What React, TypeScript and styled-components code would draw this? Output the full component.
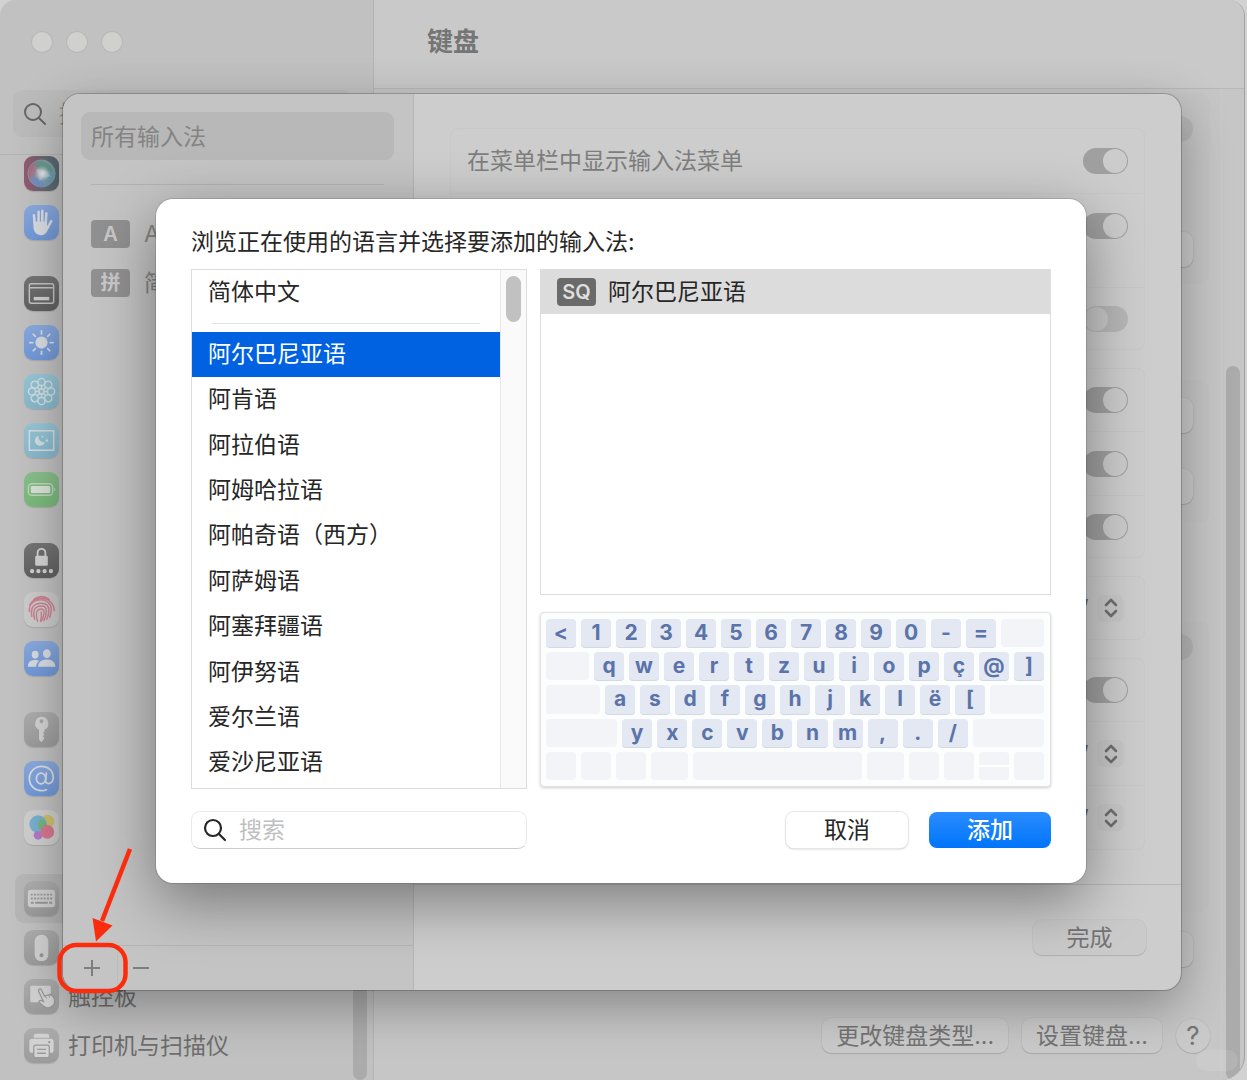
import React from "react";
import styled, { createGlobalStyle } from "styled-components";

const Global = createGlobalStyle`
  *, *::before, *::after { box-sizing: border-box; }
  body {
    margin: 0;
    background: #c8c8c8;
    font-family: Inter, "Noto Sans CJK SC", sans-serif;
    font-size: 23px;
    line-height: 32px;
    color: #262626;
  }
  button, input, select { font: inherit; color: inherit; margin: 0; border: 0; background: none; padding: 0; }
  ul { list-style: none; margin: 0; padding: 0; }
  h1, h2 { margin: 0; font-weight: inherit; font-size: inherit; }
`;

/* ---------- settings window ---------- */

const Screen = styled.div`
  position: relative;
  height: 100vh;
  min-height: 1080px;
  overflow: hidden;
  padding-right: 2px;
  background: #d2d2d2;
`;

const Window = styled.div`
  display: flex;
  height: 100%;
  background: #c6c6c6;
  border-right: 1px solid #a2a2a2;
  border-radius: 16px 16px 24px 0;
  overflow: hidden;
`;

const Sidebar = styled.aside`
  position: relative;
  display: flex;
  flex-direction: column;
  flex: 0 0 374px;
  min-width: 0;
  background: #c1c1c1;
  border-right: 1px solid #b3b3b3;
`;

const SidebarHead = styled.div`
  flex: 0 0 155px;
  border-bottom: 1px solid #b4b4b4;
`;

const Lights = styled.div`
  display: flex;
  gap: 15px;
  padding: 32px 0 0 32px;
  height: 90px;
`;

const Light = styled.button`
  width: 20px;
  height: 20px;
  border-radius: 50%;
  background: #d0d0ce;
  box-shadow: 0 0 0 1px #b8b8b6;
`;

const SideSearch = styled.label`
  display: flex;
  align-items: center;
  gap: 12px;
  height: 47px;
  margin: 0 21px 0 13px;
  padding: 0 10px;
  border-radius: 9px;
  background: #bbbbbb;
  color: #666666;
`;

const SideInput = styled.input`
  flex: 1;
  min-width: 0;
  outline: none;
  &::placeholder { color: #8a8a8a; opacity: 1; }
`;

const SideScroll = styled.nav`
  flex: 1;
  margin-top: -6px;
  padding: 0 21px 0 15px;
  overflow: hidden;
`;

const SideGroup = styled.ul`
  & + & { margin-top: 22px; }
`;

const SideRow = styled.li<{ $on?: boolean }>`
  display: flex;
  align-items: center;
  gap: 9px;
  height: 49px;
  padding-left: 9px;
  border-radius: 9px;
  color: #6e6e6e;
  background: ${(p) => (p.$on ? "#b6b6b6" : "transparent")};
`;

const Tile = styled.span<{ $bg: string }>`
  display: flex;
  flex: 0 0 35px;
  height: 35px;
  border-radius: 9px;
  overflow: hidden;
  background: ${(p) => p.$bg};
  box-shadow: 0 1px 1px rgba(0, 0, 0, 0.12);
  svg { width: 35px; height: 35px; }
`;

const ScrollThumb = styled.div<{ $top: string; $right: number; $bottom: string }>`
  position: absolute;
  top: ${(p) => p.$top};
  bottom: ${(p) => p.$bottom};
  right: ${(p) => p.$right}px;
  width: 14px;
  border-radius: 7px;
  background: #ababab;
`;

const Main = styled.main`
  position: relative;
  display: flex;
  flex-direction: column;
  flex: 1;
  min-width: 0;
`;

const MainHead = styled.header`
  flex: 0 0 89px;
  padding: 26px 53px;
  background: #c9c9c9;
  border-bottom: 1px solid #b7b7b7;
  color: #757575;
  font-size: 26px;
  font-weight: 700;
`;

const MainBody = styled.div`
  display: flex;
  flex: 1;
  flex-direction: column;
  margin-right: 22px;
  padding: 5px 11px 27px 16px;
  border-right: 1px solid #c9c9c9;
`;

const Box = styled.section<{ $gap: number }>`
  margin-top: ${(p) => p.$gap}px;
  border-radius: 10px;
  background: #c4c4c4;
`;

const BoxRow = styled.div<{ $h: number }>`
  display: flex;
  align-items: center;
  justify-content: flex-end;
  height: ${(p) => p.$h}px;
  padding-right: 17px;
`;

const Plain = styled.button<{ $w?: number }>`
  height: 35px;
  padding: 0 14px;
  min-width: ${(p) => p.$w ?? 0}px;
  border-radius: 9px;
  background: #cacaca;
  color: #747474;
  line-height: 34px;
  box-shadow: 0 0 0 1px rgba(0, 0, 0, 0.03), 0 1px 1px rgba(0, 0, 0, 0.12);
`;

const Help = styled(Plain)`
  width: 34px;
  height: 34px;
  padding: 0;
  border-radius: 50%;
  font-size: 26px;
`;

const Actions = styled.div`
  display: flex;
  align-items: center;
  justify-content: flex-end;
  gap: 14px;
  margin-top: auto;
`;

const Watermark = styled.div`
  position: absolute;
  right: 6px;
  bottom: 9px;
  width: 42px;
  height: 21px;
  border-radius: 11px;
  background: rgba(255, 255, 255, 0.1);
`;

/* ---------- switches and pop-ups ---------- */

const Toggle = styled.input`
  appearance: none;
  display: flex;
  flex: none;
  align-items: center;
  justify-content: flex-start;
  width: 45px;
  height: 26px;
  padding: 1px;
  border-radius: 13px;
  background: #b7b7b7;
  &::before {
    content: "";
    width: 24px;
    height: 24px;
    border-radius: 50%;
    background: #c8c8c8;
  }
  &:checked { background: #a0a0a0; justify-content: flex-end; }
  &:checked::before { background: #cccccc; }
`;

const PopupWrap = styled.div`
  display: flex;
  align-items: center;
  gap: 8px;
  padding-right: 4px;
  color: #6a6a6a;
`;

const PopupSelect = styled.select`
  appearance: none;
  outline: none;
  text-align: right;
`;

const Chevrons = styled.span`
  display: flex;
  align-items: center;
  justify-content: center;
  width: 27px;
  height: 27px;
  border-radius: 6px;
  background: rgba(0, 0, 0, 0.02);
`;

/* ---------- input source sheet ---------- */

const SheetLayer = styled.div`
  position: absolute;
  inset: 0;
  display: flex;
  padding: 94px 66px 90px 63px;
`;

const Sheet = styled.section`
  display: flex;
  flex: 1;
  border-radius: 17px;
  overflow: hidden;
  background: #cdcdcd;
  box-shadow: 0 0 0 1px rgba(0, 0, 0, 0.2), 0 16px 50px rgba(0, 0, 0, 0.32);
`;

const Sources = styled.div`
  display: flex;
  flex-direction: column;
  flex: 0 0 351px;
  background: #c4c4c4;
  border-right: 1px solid #b5b5b5;
`;

const SourceList = styled.div`
  flex: 1;
  padding: 18px 19px 0 18px;
`;

const AllSources = styled.button`
  display: block;
  width: 100%;
  height: 48px;
  padding: 2px 10px 0;
  border-radius: 9px;
  text-align: left;
  background: #b8b8b8;
  color: #848484;
`;

const Rule = styled.hr`
  height: 1px;
  margin: 24px 10px;
  border: 0;
  background: #b2b2b2;
`;

const Source = styled.div`
  display: flex;
  align-items: center;
  gap: 14px;
  height: 49px;
  padding-left: 10px;
  color: #848484;
`;

const Badge = styled.span<{ $dark?: boolean }>`
  flex: 0 0 39px;
  height: 28px;
  border-radius: 4px;
  text-align: center;
  font-size: 20px;
  font-weight: 600;
  line-height: 28px;
  background: ${(p) => (p.$dark ? "#6a6a6a" : "#909090")};
  color: ${(p) => (p.$dark ? "#dedede" : "#c8c8c8")};
`;

const SourceBar = styled.div`
  display: flex;
  height: 45px;
  border-top: 1px solid #b5b5b5;
  color: #7e7e7e;
`;

const BarButton = styled.button`
  display: flex;
  align-items: center;
  justify-content: center;
  width: 46px;
  &:first-child { width: 54px; padding-left: 4px; }
  & + & { border-left: 1px solid #bdbdbd; }
`;

const Options = styled.div`
  display: flex;
  flex: 1;
  flex-direction: column;
  min-width: 0;
`;

const OptionBody = styled.div`
  flex: 1;
  padding: 34px 36px 0;
`;

const Card = styled.div`
  border: 1px solid #c8c8c8;
  border-radius: 8px;
  & + & { margin-top: 18px; }
`;

const Option = styled.label<{ $h?: number; $top?: boolean }>`
  display: flex;
  align-items: ${(p) => (p.$top ? "flex-start" : "center")};
  justify-content: space-between;
  height: ${(p) => p.$h ?? 62}px;
  padding: ${(p) => (p.$top ? "19px" : "0")} 16px 0;
  color: #7e7e7e;
  & + & { border-top: 1px solid #c8c8c8; }
  & > :only-child { margin-left: auto; }
`;

const OptionFoot = styled.div`
  display: flex;
  justify-content: flex-end;
  padding: 35px 35px;
  height: 106px;
  border-top: 1px solid #b7b7b7;
`;

/* ---------- add-language dialog ---------- */

const DialogLayer = styled.div`
  position: absolute;
  inset: 0;
  padding: 199px 161px 0 156px;
`;

const Dialog = styled.section`
  padding: 27px 35px 34px 35px;
  border-radius: 17px;
  background: #ffffff;
  box-shadow: 0 0 0 1px rgba(0, 0, 0, 0.12), 0 18px 60px rgba(0, 0, 0, 0.4);
`;

const DialogTitle = styled.h2`
  height: 43px;
`;

const Columns = styled.div`
  display: grid;
  grid-template-columns: minmax(0, 336fr) minmax(0, 511fr);
  column-gap: 13px;
`;

const Languages = styled.div`
  display: flex;
  height: 520px;
  border: 1px solid #dddddd;
`;

const LanguageList = styled.div`
  display: flex;
  flex: 1;
  flex-direction: column;
`;

const Lang = styled.button<{ $on?: boolean }>`
  flex: 1 0 45px;
  padding: 0 16px 2px;
  text-align: left;
  background: ${(p) => (p.$on ? "#0062e1" : "transparent")};
  color: ${(p) => (p.$on ? "#ffffff" : "#262626")};
`;

const FirstLang = styled(Lang)`
  flex: 0 0 45px;
`;

const LangRule = styled.hr`
  flex: none;
  height: 1px;
  margin: 8px 20px;
  border: 0;
  background: #e2e2e2;
`;

const Rest = styled.div`
  display: flex;
  flex: 1;
  flex-direction: column;
  padding-bottom: 2px;
`;

const Track = styled.div`
  flex: 0 0 26px;
  padding: 6px 5px;
  border-left: 1px solid #e8e8e8;
  background: #fafafa;
`;

const Thumb = styled.div`
  height: 46px;
  border-radius: 8px;
  background: #c1c1c1;
`;

const RightColumn = styled.div`
  display: flex;
  flex-direction: column;
  gap: 17px;
`;

const Layouts = styled.div`
  height: 326px;
  border: 1px solid #dddddd;
`;

const Layout = styled.button`
  display: flex;
  align-items: center;
  gap: 12px;
  width: 100%;
  height: 44px;
  padding: 0 16px;
  background: #dcdcdc;
`;

const Keyboard = styled.div`
  display: grid;
  grid-auto-rows: 1fr;
  gap: 5px;
  height: 175px;
  padding: 6px 6px 6px 5px;
  border: 1px solid #e2e4e4;
  border-radius: 4px;
  background: #fcfdfd;
  box-shadow: 0 1px 3px rgba(0, 0, 0, 0.2);
`;

const KeyRow = styled.div`
  display: flex;
  gap: 5px;
`;

const Key = styled.span<{ $w: number; $blank: boolean; $split?: boolean }>`
  flex: ${(p) => p.$w} 0 0;
  min-width: 0;
  border-radius: 4px;
  text-align: center;
  font-size: 21px;
  font-weight: 700;
  line-height: 28px;
  color: #5a74a9;
  background: ${(p) =>
    p.$split
      ? "linear-gradient(#f3f4f7 45%, #ffffff 45%, #ffffff 52%, #f3f4f7 52%)"
      : p.$blank
      ? "#f3f4f7"
      : "#e4e8f2"};
  box-shadow: ${(p) => (p.$blank ? "none" : "0 1px 0 #d3d8e5")};
`;

const DialogFoot = styled(Columns)`
  align-items: center;
  padding-top: 22px;
`;

const Search = styled.label`
  display: flex;
  align-items: center;
  gap: 12px;
  height: 38px;
  padding: 0 11px;
  border: 1px solid #e9e9e9;
  border-bottom-color: #cccccc;
  border-radius: 9px;
`;

const SearchInput = styled.input`
  flex: 1;
  min-width: 0;
  height: 34px;
  outline: none;
  &::placeholder { color: #bfbfbf; opacity: 1; }
`;

const Buttons = styled.div`
  display: flex;
  justify-content: flex-end;
  gap: 21px;
`;

const DialogButton = styled.button<{ $primary?: boolean }>`
  width: 122px;
  height: 36px;
  border-radius: 8px;
  line-height: 34px;
  font-weight: ${(p) => (p.$primary ? 500 : 400)};
  background: ${(p) => (p.$primary ? "linear-gradient(#2a8cff, #0074fb)" : "#ffffff")};
  color: ${(p) => (p.$primary ? "#ffffff" : "#262626")};
  box-shadow: ${(p) => (p.$primary ? "none" : "0 0 0 1px #e6e6e6, 0 1px 2px rgba(0, 0, 0, 0.3)")};
`;

const Annotation = styled.svg`
  position: absolute;
  left: 50px;
  bottom: 80px;
  width: 90px;
  height: 160px;
  pointer-events: none;
`;

/* ---------- drawings ---------- */

const Magnifier = ({ w }: { w: number }) => (
  <svg width="24" height="24" viewBox="0 0 24 24" fill="none" stroke="currentColor" strokeWidth={w} strokeLinecap="round">
    <circle cx="10" cy="10" r="8" />
    <path d="M16 16l6 6" />
  </svg>
);

const UpDown = () => (
  <svg width="14" height="20" viewBox="0 0 14 20" fill="none" stroke="#707070" strokeWidth="2.6" strokeLinecap="round" strokeLinejoin="round">
    <path d="M2 7l5-5 5 5M2 13l5 5 5-5" />
  </svg>
);

const Art = ({ children }: { children: React.ReactNode }) => (
  <svg viewBox="0 0 36 36" fill="none" stroke="none">{children}</svg>
);

const L = "#d8dce0";
const blue = "linear-gradient(#8aaade, #7198d8)";
const cyan = "linear-gradient(#98c6d6, #88b8cc)";
const gray = "linear-gradient(#adadad, #9b9b9b)";
const dark = "linear-gradient(#757575, #606060)";
const petals = [0, 45, 90, 135, 180, 225, 270, 315];

const icons: Record<string, { bg: string; art: React.ReactNode }> = {
  siri: {
    bg: "linear-gradient(90deg, #98586f, #656a72 60%, #55686f)",
    art: (
      <Art>
        <defs>
          <linearGradient id="orb" x1="0" y1="0.3" x2="1" y2="0.7">
            <stop offset="0" stopColor="#b0607c" />
            <stop offset="0.45" stopColor="#8f9ca8" />
            <stop offset="1" stopColor="#5f9bb0" />
          </linearGradient>
          <radialGradient id="core">
            <stop offset="0" stopColor="#e2e6ea" />
            <stop offset="1" stopColor="#e2e6ea" stopOpacity="0" />
          </radialGradient>
        </defs>
        <circle cx="18" cy="18" r="14" fill="url(#orb)" stroke="#8f9da3" strokeWidth="0.8" />
        <path d="M10 7c8-4 18 0 20 9-6 1-14-1-20-9z" fill="#5f9a88" opacity="0.8" />
        <path d="M6 22c6-1 12 2 16 9-7 3-14-1-16-9z" fill="#6f8fc8" opacity="0.8" />
        <path d="M12 13l10 2 6 6-8 1-4 4-1-6z" fill="#d7dfe6" opacity="0.3" />
        <circle cx="19" cy="18" r="8" fill="url(#core)" />
      </Art>
    ),
  },
  hand: {
    bg: blue,
    art: (
      <Art>
        <g stroke={L} strokeWidth="2.6" strokeLinecap="round">
          <path d="M11 19L10.2 10.5M15 17V7M18.8 17V6M22.4 18L23 8.500M24 24l4-7.500" />
        </g>
        <path d="M9.7 17h14v5l2-1.500c-.6 6-3.500 10.500-8 10.500-5 0-8-4-8-9z" fill={L} />
      </Art>
    ),
  },
  dock: {
    bg: dark,
    art: (
      <Art>
        <rect x="5.500" y="8" width="25" height="20" rx="2" stroke="#c4c4c4" strokeWidth="1.500" />
        <path d="M6 12h24" stroke="#c4c4c4" strokeWidth="1.500" />
        <rect x="10" y="21.500" width="16" height="3.500" fill="#cecece" />
      </Art>
    ),
  },
  sun: {
    bg: blue,
    art: (
      <Art>
        <circle cx="18" cy="18" r="6.300" fill={L} />
        {petals.map((a) => (
          <path key={a} d="M18 6v3" stroke={L} strokeWidth="1.800" strokeLinecap="round" transform={`rotate(${a} 18 18)`} />
        ))}
      </Art>
    ),
  },
  flower: {
    bg: cyan,
    art: (
      <Art>
        <g stroke="#d2dfe3" strokeWidth="1.500">
          {petals.map((a) => (
            <circle key={a} cx="18" cy="8.200" r="3.700" transform={`rotate(${a} 18 18)`} />
          ))}
          <circle cx="18" cy="18" r="2.600" />
          {petals.map((a) => (
            <path key={"l" + a} d="M18 15.400v-3.500" transform={`rotate(${a} 18 18)`} />
          ))}
        </g>
      </Art>
    ),
  },
  saver: {
    bg: cyan,
    art: (
      <Art>
        <rect x="5.500" y="8" width="25" height="20" stroke="#d2dfe3" strokeWidth="1.600" />
        <path d="M15 13a5.300 5.300 0 1 0 6.500 6.800A5.600 5.600 0 0 1 15 13z" fill="#d2dfe3" />
        <circle cx="19" cy="14" r="1" fill="#d2dfe3" />
        <circle cx="23.500" cy="18" r="1.400" fill="#d2dfe3" />
      </Art>
    ),
  },
  battery: {
    bg: "linear-gradient(#8abf8b, #79b97b)",
    art: (
      <Art>
        <rect x="4.500" y="12" width="25" height="12" rx="3.500" stroke="#bcd8bc" strokeWidth="1.500" />
        <rect x="7" y="14.300" width="20" height="7.400" rx="1.500" fill="#d9e2d9" />
        <path d="M31 16.200c1.800.4 1.800 3.200 0 3.600z" fill="#bcd8bc" />
      </Art>
    ),
  },
  lock: {
    bg: dark,
    art: (
      <Art>
        <rect x="11.500" y="13" width="13" height="10.500" rx="1.500" fill="#d2d2d2" />
        <path d="M14 13.500V10a4 4 0 0 1 8 0v3.500" stroke="#d2d2d2" strokeWidth="1.900" />
        <path d="M8.300 29h.01M14.800 29h.01M21.200 29h.01M27.700 29h.01" stroke="#d2d2d2" strokeWidth="4.400" strokeLinecap="round" />
      </Art>
    ),
  },
  touch: {
    bg: "#cbcbcb",
    art: (
      <Art>
        <g stroke="#cc8293" strokeWidth="1.500" strokeLinecap="round">
          <path d="M10 7.500c5-3.600 11-3.600 16 0M6 13c2-3.500 6-6.500 12-6.500 7 0 13 5.500 13 12.500M5.500 20c-.6-8 5-12 12-12 6 0 10.500 4 10.500 10 0 3-.5 5-1.500 8M8 25c-1-6-.5-13.500 10-13.500 5 0 7.500 3 7.500 7 0 4-.7 7-2 9.500M11 28c-2-6-2-13.500 7-13.500 3 0 5 2 5 5 0 4-1 7-2.500 10M14 30c-1.500-5-3-12.500 4-12.500 5 0 2 9-.5 13M17.800 20.500c.3 3 .2 6-.8 9" />
        </g>
      </Art>
    ),
  },
  users: {
    bg: blue,
    art: (
      <Art>
        <g fill={L}>
          <ellipse cx="11.500" cy="14" rx="3.500" ry="4" />
          <ellipse cx="23.500" cy="13" rx="4" ry="4.500" />
          <path d="M4 26.500c0-5 3-7 7.500-7 1.800 0 3 .4 4 1-2 1.500-2.800 3.500-2.900 6z" />
          <path d="M14.500 26.500c.2-5 3.800-7.500 9-7.500s8.500 2.500 8.800 7.500z" />
        </g>
      </Art>
    ),
  },
  key: {
    bg: gray,
    art: (
      <Art>
        <path fillRule="evenodd" d="M18 5a7 7 0 0 1 3 13.300V20l-1.500 1.500L21 23l-1.500 2 1.500 2-3 4-2.500-2.500V18.300A7 7 0 0 1 18 5zm0 2.500a2 2 0 1 0 0 4 2 2 0 0 0 0-4z" fill="#d2d2d2" />
      </Art>
    ),
  },
  at: {
    bg: blue,
    art: (
      <Art>
        <g stroke={L} strokeWidth="1.800" strokeLinecap="round">
          <ellipse cx="17.500" cy="18" rx="4.800" ry="5.500" />
          <path d="M23 12.500l-.8 8c-.2 4 7.800 4 7.800-3.500C30 10 25 5.500 18 5.500S5.500 11 5.500 18 11 30.500 18 30.500c2 0 3.500-.3 5-1" />
        </g>
      </Art>
    ),
  },
  game: {
    bg: "#cecece",
    art: (
      <Art>
        <circle cx="24" cy="12" r="7" fill="#cfc06c" />
        <circle cx="14.500" cy="14.500" r="9" fill="#78b0cc" />
        <path d="M17.500 9.500a7 7 0 0 1 6 9.500 9 9 0 0 1-4 3 7 7 0 0 1-2-12.500z" fill="#74b482" />
        <circle cx="14.500" cy="26" r="4.500" fill="#b07cc8" />
        <circle cx="24" cy="22.500" r="7" fill="#d6788f" />
      </Art>
    ),
  },
  keyboard: {
    bg: gray,
    art: (
      <Art>
        <rect x="4" y="9" width="28" height="18" rx="3" fill="#d0d0d0" />
        <path d="M7 14h22M7 18h22" stroke="#989898" strokeWidth="2" strokeDasharray="2 1.330" />
        <path d="M7 22.300h3M11.500 22.300h13M26 22.300h3" stroke="#989898" strokeWidth="2" />
      </Art>
    ),
  },
  mouse: {
    bg: gray,
    art: (
      <Art>
        <rect x="11" y="5" width="14" height="27" rx="6.500" fill="#d2d2d2" />
        <circle cx="18" cy="26" r="2" fill="#989898" />
      </Art>
    ),
  },
  pad: {
    bg: gray,
    art: (
      <Art>
        <rect x="6.500" y="7" width="21" height="17" rx="1" fill="#d2d2d2" />
        <path d="M15 12.500c-.8-2 2-3.300 3-1.200l3 6.200 5-1.500c3-.6 5.500 3.500 5.500 7 0 3-2 5.500-5.500 6.500-3 .8-5-.5-10-5-1.500-2 .5-3 2-2.200l2 .8z" fill="#d2d2d2" stroke="#989898" strokeWidth="1.300" />
        <path d="M22 17.500l1 2.500M25.500 16.500l1 2.500" stroke="#989898" strokeWidth="1" />
      </Art>
    ),
  },
  printer: {
    bg: gray,
    art: (
      <Art>
        <path d="M10 10V8.500A2.500 2.500 0 0 1 12.500 6h11A2.500 2.500 0 0 1 26 8.500V10z" fill="#d2d2d2" />
        <rect x="5.500" y="11" width="25" height="14.500" rx="3" fill="#d2d2d2" />
        <circle cx="26" cy="14.500" r="1.200" fill="#989898" />
        <rect x="10" y="17.500" width="16" height="13" rx="2" fill="#d2d2d2" stroke="#989898" strokeWidth="1.300" />
        <path d="M13.500 22h9M13.500 26h9" stroke="#989898" strokeWidth="1.400" />
      </Art>
    ),
  },
};

/* ---------- data ---------- */

const sideGroups: { icon: string; label?: string; on?: boolean }[][] = [
  [{ icon: "siri" }, { icon: "hand" }],
  [{ icon: "dock" }, { icon: "sun" }, { icon: "flower" }, { icon: "saver" }, { icon: "battery" }],
  [{ icon: "lock" }, { icon: "touch" }, { icon: "users" }],
  [{ icon: "key" }, { icon: "at" }, { icon: "game" }],
  [
    { icon: "keyboard", on: true },
    { icon: "mouse" },
    { icon: "pad", label: "触控板" },
    { icon: "printer", label: "打印机与扫描仪" },
  ],
];

const languages = [
  "阿尔巴尼亚语",
  "阿肯语",
  "阿拉伯语",
  "阿姆哈拉语",
  "阿帕奇语（西方）",
  "阿萨姆语",
  "阿塞拜疆语",
  "阿伊努语",
  "爱尔兰语",
  "爱沙尼亚语",
];

type K = [string, number];
const keys = (s: string): K[] => s.split(" ").map((c) => [c, 30]);
const keyRows: K[][] = [
  [...keys("< 1 2 3 4 5 6 7 8 9 0 - ="), ["", 43]],
  [["", 43], ...keys("q w e r t z u i o p ç @ ]")],
  [["", 54], ...keys("a s d f g h j k l ë ["), ["", 54]],
  [["", 71], ...keys("y x c v b n m , . /"), ["", 71]],
  [["", 30], ["", 30], ["", 30], ["", 37], ["", 168], ["", 37], ["", 30], ["", 30], ["split", 30], ["", 30]],
];

const Popup = ({ value, label }: { value: string; label: string }) => (
  <PopupWrap>
    <PopupSelect aria-label={label} defaultValue={value}>
      <option>{value}</option>
    </PopupSelect>
    <Chevrons><UpDown /></Chevrons>
  </PopupWrap>
);

export default function App() {
  return (
    <Screen>
      <Global />
      <Window>
        <Sidebar>
          <SidebarHead>
            <Lights>
              <Light aria-label="关闭" />
              <Light aria-label="最小化" />
              <Light aria-label="缩放" />
            </Lights>
            <SideSearch>
              <Magnifier w={2} />
              <SideInput aria-label="搜索设置" placeholder="搜索" />
            </SideSearch>
          </SidebarHead>
          <SideScroll>
            {sideGroups.map((group, i) => (
              <SideGroup key={i}>
                {group.map((row) => (
                  <SideRow key={row.icon} $on={row.on}>
                    <Tile $bg={icons[row.icon].bg}>{icons[row.icon].art}</Tile>
                    {row.label}
                  </SideRow>
                ))}
              </SideGroup>
            ))}
          </SideScroll>
          <ScrollThumb $top="50%" $bottom="0" $right={6} />
        </Sidebar>
        <Main>
          <MainHead as="h1">键盘</MainHead>
          <MainBody>
            <Box $gap={0}>
              <BoxRow $h={70}><Toggle type="checkbox" aria-label="键盘亮度" /></BoxRow>
              <BoxRow $h={50} />
              <BoxRow $h={70}><Plain $w={90} aria-label="键盘快捷键" /></BoxRow>
            </Box>
            <Box $gap={96}>
              <BoxRow $h={71}><Plain $w={90} aria-label="键盘导航" /></BoxRow>
              <BoxRow $h={71}><Plain $w={90} aria-label="文字输入" /></BoxRow>
            </Box>
            <Box $gap={100}>
              <BoxRow $h={50}><Toggle type="checkbox" aria-label="听写" /></BoxRow>
              <BoxRow $h={240} />
            </Box>
            <BoxRow $h={74}><Plain $w={90} aria-label="听写隐私" /></BoxRow>
            <Actions>
              <Plain>更改键盘类型...</Plain>
              <Plain>设置键盘...</Plain>
              <Help>?</Help>
            </Actions>
          </MainBody>
          <ScrollThumb $top="366px" $bottom="0" $right={4} />
          <Watermark />
        </Main>
      </Window>

      <SheetLayer>
        <Sheet>
          <Sources>
            <SourceList>
              <AllSources>所有输入法</AllSources>
              <Rule />
              <Source><Badge>A</Badge>A</Source>
              <Source><Badge>拼</Badge>简</Source>
            </SourceList>
            <SourceBar>
              <BarButton aria-label="添加输入法">
                <svg width="16" height="16" stroke="currentColor" strokeWidth="2"><path d="M8 0v16M0 8h16" /></svg>
              </BarButton>
              <BarButton aria-label="移除输入法">
                <svg width="16" height="16" stroke="currentColor" strokeWidth="2"><path d="M0 8h16" /></svg>
              </BarButton>
            </SourceBar>
          </Sources>
          <Options>
            <OptionBody>
              <Card>
                <Option $h={64}>
                  <span>在菜单栏中显示输入法菜单</span>
                  <Toggle type="checkbox" defaultChecked />
                </Option>
                <Option $h={94} $top><Toggle type="checkbox" aria-label="大写锁定键切换" defaultChecked /></Option>
                <Option><Toggle type="checkbox" aria-label="自动切换输入法" /></Option>
              </Card>
              <Card>
                <Option><Toggle type="checkbox" aria-label="自动纠正拼写" defaultChecked /></Option>
                <Option $h={64}><Toggle type="checkbox" aria-label="自动大写字词的首字母" defaultChecked /></Option>
                <Option><Toggle type="checkbox" aria-label="连按两下空格键插入句号" defaultChecked /></Option>
              </Card>
              <Card>
                <Option><Popup label="拼写" value="”" /></Option>
              </Card>
              <Card>
                <Option><Toggle type="checkbox" aria-label="使用智能引号" defaultChecked /></Option>
                <Option $h={64}><Popup label="双引号" value="”" /></Option>
                <Option $h={64}><Popup label="单引号" value="’" /></Option>
              </Card>
            </OptionBody>
            <OptionFoot><Plain $w={113}>完成</Plain></OptionFoot>
          </Options>
        </Sheet>
      </SheetLayer>

      <DialogLayer>
        <Dialog role="dialog" aria-labelledby="dialog-title">
          <DialogTitle id="dialog-title">浏览正在使用的语言并选择要添加的输入法:</DialogTitle>
          <Columns>
            <Languages>
              <LanguageList>
                <FirstLang>简体中文</FirstLang>
                <LangRule />
                <Rest>
                  {languages.map((name, i) => (
                    <Lang key={name} $on={i === 0}>{name}</Lang>
                  ))}
                </Rest>
              </LanguageList>
              <Track><Thumb /></Track>
            </Languages>
            <RightColumn>
              <Layouts>
                <Layout><Badge $dark>SQ</Badge>阿尔巴尼亚语</Layout>
              </Layouts>
              <Keyboard>
                {keyRows.map((row, i) => (
                  <KeyRow key={i}>
                    {row.map(([c, w], j) => (
                      <Key key={j} $w={w} $blank={c === "" || c === "split"} $split={c === "split"}>
                        {c === "split" ? "" : c}
                      </Key>
                    ))}
                  </KeyRow>
                ))}
              </Keyboard>
            </RightColumn>
          </Columns>
          <DialogFoot>
            <Search>
              <Magnifier w={2.2} />
              <SearchInput aria-label="搜索语言" placeholder="搜索" />
            </Search>
            <Buttons>
              <DialogButton>取消</DialogButton>
              <DialogButton $primary>添加</DialogButton>
            </Buttons>
          </DialogFoot>
        </Dialog>
      </DialogLayer>

      <Annotation viewBox="0 0 90 160" fill="none">
        <path d="M80 9L52 81" stroke="#fb2c0d" strokeWidth="4.500" />
        <path d="M42.500 78L62.500 85.500L46 101.500z" fill="#fb2c0d" />
        <rect x="9.500" y="105" width="66" height="46" rx="17" stroke="#fb2c0d" strokeWidth="4.500" />
      </Annotation>
    </Screen>
  );
}
